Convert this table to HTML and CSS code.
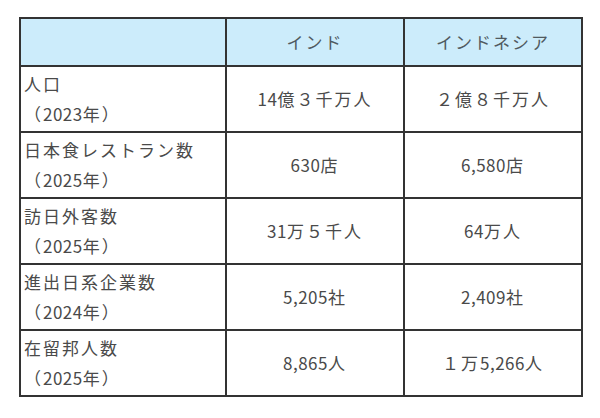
FILE: index.html
```html
<!DOCTYPE html>
<html lang="ja">
<head>
<meta charset="utf-8">
<link rel="stylesheet" href="styles.css">
</head>
<body>
<div class="page">
  <div class="grid">
    <div class="cell head"></div>
    <div class="cell head center">インド</div>
    <div class="cell head center">インドネシア</div>

    <div class="cell label"><span>人口</span><span>（<span class="num">2023</span>年）</span></div>
    <div class="cell center"><span class="num">14</span>億３千万人</div>
    <div class="cell center">２億８千万人</div>

    <div class="cell label"><span>日本食レストラン数</span><span>（<span class="num">2025</span>年）</span></div>
    <div class="cell center"><span class="num">630</span>店</div>
    <div class="cell center"><span class="num">6,580</span>店</div>

    <div class="cell label"><span>訪日外客数</span><span>（<span class="num">2025</span>年）</span></div>
    <div class="cell center"><span class="num">31</span>万５千人</div>
    <div class="cell center"><span class="num">64</span>万人</div>

    <div class="cell label"><span>進出日系企業数</span><span>（<span class="num">2024</span>年）</span></div>
    <div class="cell center"><span class="num">5,205</span>社</div>
    <div class="cell center"><span class="num">2,409</span>社</div>

    <div class="cell label"><span>在留邦人数</span><span>（<span class="num">2025</span>年）</span></div>
    <div class="cell center"><span class="num">8,865</span>人</div>
    <div class="cell center">１万<span class="num">5,266</span>人</div>
  </div>
</div>
</body>
</html>
```
FILE: styles.css
```css
* { box-sizing: border-box; }
html, body { margin: 0; padding: 0; background: #ffffff; }
.page {
  padding: 17px 0 0 19px;
  font-family: "Noto Sans CJK JP", "Noto Sans", sans-serif;
  font-size: 17px;
  color: #4a4a4a;
  letter-spacing: 2px;
}
.grid {
  display: grid;
  width: 564px;
  grid-template-columns: 206px 178px 178px;
  grid-template-rows: 48px repeat(5, 66px);
  border-left: 2px solid #333333;
  border-top: 2px solid #333333;
}
.cell {
  border-right: 2px solid #333333;
  border-bottom: 2px solid #333333;
  display: flex;
  align-items: center;
  line-height: 30px;
}
.head { background: #ccecfb; color: #505a60; }
.center { justify-content: center; }
.num { letter-spacing: 0.5px; }
.label {
  flex-direction: column;
  align-items: flex-start;
  justify-content: center;
  padding-left: 3px;
}
```
